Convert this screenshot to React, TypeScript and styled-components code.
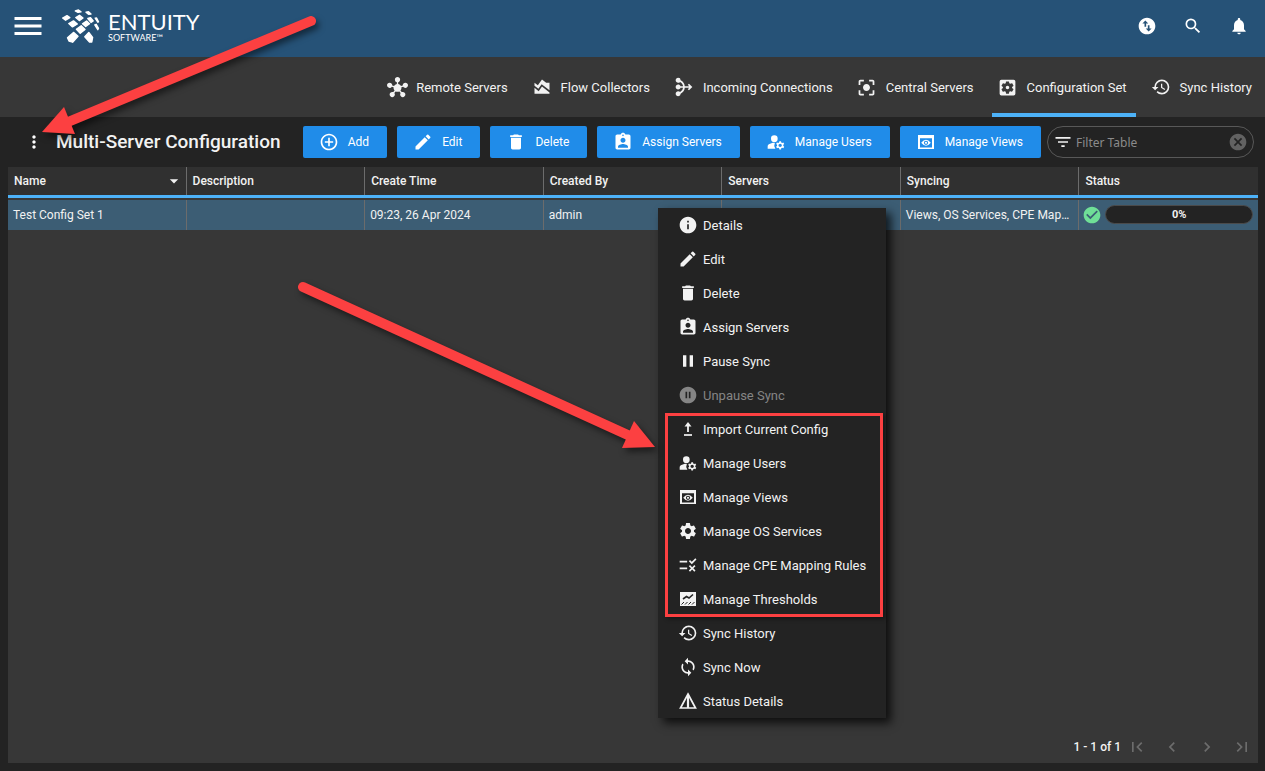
import React from "react";
import styled, { createGlobalStyle, css } from "styled-components";
import {
  MdAddCircleOutline,
  MdAreaChart,
  MdArrowDropDown,
  MdAssignmentInd,
  MdCancel,
  MdCenterFocusStrong,
  MdCheckCircle,
  MdChevronLeft,
  MdChevronRight,
  MdDelete,
  MdEdit,
  MdFilterList,
  MdFirstPage,
  MdHistory,
  MdHub,
  MdInfo,
  MdLastPage,
  MdLoop,
  MdManageAccounts,
  MdMediation,
  MdMenu,
  MdMoreVert,
  MdNotifications,
  MdPause,
  MdPauseCircleFilled,
  MdRule,
  MdSearch,
  MdSettings,
  MdSettingsApplications,
  MdSwapVerticalCircle,
} from "react-icons/md";

const GlobalStyle = createGlobalStyle`
  * { box-sizing: border-box; }
  body {
    margin: 0;
    background: #232323;
    color: #f2f2f2;
    font-family: Roboto, "Liberation Sans", sans-serif;
    font-size: 13px;
  }
  button, input { font: inherit; color: inherit; }
  svg { display: block; flex: none; }
`;

const Page = styled.div`
  position: relative;
  display: flex;
  flex-direction: column;
  min-height: 100vh;
`;

const TopBar = styled.header`
  display: flex;
  align-items: center;
  justify-content: space-between;
  height: 57px;
  padding: 0 16px 5px 10px;
  background: #265277;
`;

const Cluster = styled.div<{ $gap: number }>`
  display: flex;
  align-items: center;
  gap: ${(p) => p.$gap}px;
`;

const IconButton = styled.button<{ $color?: string }>`
  display: flex;
  align-items: center;
  justify-content: center;
  padding: 0;
  border: 0;
  background: none;
  color: ${(p) => p.$color ?? "#fff"};
  cursor: pointer;
`;

const Brand = styled.a`
  display: flex;
  align-items: center;
  gap: 7px;
  color: #fff;
  text-decoration: none;
`;

const BrandText = styled.span`
  display: flex;
  flex-direction: column;
  font-family: Lato, sans-serif;
`;

const BrandName = styled.span`
  font-size: 22px;
  line-height: 24px;
`;

const BrandSub = styled.span`
  font-size: 9px;
  line-height: 8px;
`;

const Tabs = styled.nav`
  display: flex;
  justify-content: flex-end;
  gap: 9px;
  height: 60px;
  padding-right: 4px;
  background: #373737;
`;

const Tab = styled.a<{ $active?: boolean }>`
  display: flex;
  align-items: center;
  gap: 8px;
  padding: 4px 9px 0 5px;
  border-bottom: 4px solid ${(p) => (p.$active ? "#4db2f8" : "transparent")};
  color: #f2f2f2;
  text-decoration: none;
  white-space: nowrap;
`;

const TabIcon = styled.span`
  display: flex;
  justify-content: center;
  width: 22px;
`;

const Toolbar = styled.div`
  display: flex;
  align-items: center;
  height: 50px;
  padding: 0 11px 0 24px;
`;

const Title = styled.h1`
  flex: 1;
  margin: 0 0 0 12px;
  font-size: 19px;
  font-weight: 500;
  line-height: 24px;
  white-space: nowrap;
`;

const Actions = styled.div`
  display: flex;
  gap: 10px;
  margin-right: 6px;
`;

const ActionButton = styled.button`
  display: flex;
  align-items: center;
  gap: 9px;
  height: 32px;
  padding: 0 18px 0 16px;
  border: 0;
  border-radius: 2px;
  background: #208ce9;
  color: #fff;
  font-size: 12px;
  white-space: nowrap;
  cursor: pointer;
`;

const Filter = styled.label`
  display: flex;
  align-items: center;
  gap: 3px;
  width: 207px;
  height: 32px;
  padding: 0 5px;
  border: 1px solid #585858;
  border-radius: 16px;
`;

const FilterInput = styled.input`
  flex: 1;
  min-width: 0;
  padding: 0;
  border: 0;
  outline: 0;
  background: none;
  font-family: "Noto Sans", sans-serif;
  font-size: 12px;
  &::placeholder { color: #8b8b8b; opacity: 1; }
`;

const Panel = styled.main`
  display: flex;
  flex: 1;
  flex-direction: column;
  justify-content: space-between;
  margin: 0 7px 8px 8px;
  background: #373737;
`;

const Table = styled.table`
  width: 100%;
  border-collapse: separate;
  border-spacing: 0;
  table-layout: fixed;
  font-size: 12px;
`;

const divider = css`
  &:not(:last-child) { border-right: 1px solid #6c6c6c; }
`;

const HeadCell = styled.th`
  height: 28px;
  padding: 0 2px 0 6px;
  background: #303030;
  font-weight: 500;
  text-align: left;
  ${divider}
`;

const HeadLabel = styled.span`
  display: flex;
  align-items: center;
  justify-content: space-between;
`;

const RuleCell = styled.td`
  height: 5px;
  padding: 0;
  border-top: 3px solid #4db2f8;
`;

const Cell = styled.td`
  height: 30px;
  padding: 0 5px;
  overflow: hidden;
  background: #3c5d74;
  text-overflow: ellipsis;
  white-space: nowrap;
  ${divider}
`;

const Status = styled.div`
  display: flex;
  align-items: flex-start;
  gap: 3px;
  margin-left: -2px;
`;

const Progress = styled.div`
  flex: 1;
  height: 19px;
  border: 1px solid #4a4a4a;
  border-radius: 10px;
  background: #232323;
  font-size: 11px;
  font-weight: 700;
  line-height: 18px;
  text-align: center;
`;

const Pager = styled.footer`
  display: flex;
  align-items: center;
  justify-content: flex-end;
  gap: 15px;
  height: 32px;
  padding-right: 6px;
  font-size: 12px;
  font-weight: 500;
`;

const PageCount = styled.span`
  margin-right: -9px;
`;

const Menu = styled.div`
  position: absolute;
  top: 208px;
  left: 658px;
  width: 228px;
  background: #232323;
  box-shadow: 5px 5px 9px rgba(0, 0, 0, 0.75);
`;

const MenuItem = styled.button`
  display: flex;
  align-items: center;
  gap: 5px;
  width: 100%;
  height: 34px;
  padding: 0 20px;
  border: 0;
  background: none;
  color: #f2f2f2;
  text-align: left;
  white-space: nowrap;
  cursor: pointer;
  &:disabled { color: #858585; }
`;

const MenuIcon = styled.span`
  display: flex;
  justify-content: center;
  width: 20px;
`;

const Highlight = styled.div`
  position: absolute;
  top: 205px;
  left: 7px;
  width: 218px;
  height: 204px;
  border: 3px solid #fc4041;
  box-shadow: 2px 2px 4px rgba(0, 0, 0, 0.4);
  pointer-events: none;
`;

const Annotations = styled.svg`
  position: absolute;
  top: 0;
  left: 0;
  pointer-events: none;
  filter: drop-shadow(3px 4px 3px rgba(0, 0, 0, 0.5));
`;

const LogoMark = () => (
  <svg
    width="39"
    height="35"
    viewBox="0 0 39 35"
    fill="#fff"
    stroke="#fff"
    strokeWidth="1.4"
    strokeLinejoin="round"
    aria-hidden="true"
  >
    <path d="M13.300 2L16.500 1L19 2.800L16 3.400Z" />
    <path d="M24 3.200L26.500 2.800L29 5L26.500 5.200Z" />
    <path d="M.7 9L5 6.700L7.800 8.600L3.600 11.200Z" />
    <path d="M13.800 8.500L17.500 6.300L21 9L17.300 11.600Z" />
    <path d="M25.800 9.500L28.500 8.600L31.200 12L29 13.400Z" />
    <path d="M33.200 9.200L34.600 9L36.500 12.800L35.800 13.200Z" />
    <path d="M6.800 14.500L11.500 11.900L15.300 15L10.500 17.900Z" />
    <path d="M20.500 14.800L24.600 12L27.500 14.700L23.700 17.500Z" />
    <path d="M14.400 20.300L19.200 16.700L23 20.500L18.200 24.200Z" />
    <path d="M32.800 15.800L34.200 15.300L36.500 19.300L35.800 20.700Z" />
    <path d="M5.500 28.700L11.500 23.400L16 27.300L10.600 33.200L7 32Z" />
    <path d="M22.800 27.700L26.800 23.500L30.600 28.500L29.800 33L27.500 33Z" />
  </svg>
);

const PreviewIcon = () => (
  <svg width="20" height="20" viewBox="0 0 20 20" aria-hidden="true">
    <path
      d="M2 3H18V17H2ZM4 6.200V15.400H16V6.200Z"
      fill="currentColor"
      fillRule="evenodd"
    />
    <path
      d="M5.200 10.800Q10 4.800 14.800 10.800Q10 16.800 5.200 10.800ZM10 8.700A2.100 2.100 0 1 0 10 12.900A2.100 2.100 0 1 0 10 8.700Z"
      fill="currentColor"
      fillRule="evenodd"
    />
    <circle cx="10" cy="10.800" r="1.100" fill="currentColor" />
  </svg>
);

const ImportIcon = () => (
  <svg width="18" height="18" viewBox="0 0 18 18" aria-hidden="true">
    <path d="M9 12V4" stroke="currentColor" strokeWidth="1.800" />
    <path d="M5.500 6.500L9 2L12.500 6.500Z" fill="currentColor" />
    <path d="M5 15H13" stroke="currentColor" strokeWidth="1.700" />
  </svg>
);

const ThresholdIcon = () => (
  <svg width="18" height="18" viewBox="0 0 18 18" aria-hidden="true">
    <path d="M1 2H17V16H1Z" fill="currentColor" />
    <path d="M4 9L7.500 6.500L10 8L14 4.500" fill="none" stroke="#232323" strokeWidth="1.600" />
    <path d="M2.500 14.500L5 12M6 14.500L8.500 12M9.500 14.500L12 12M13 14.500L15.500 12" stroke="#232323" strokeWidth="1" />
  </svg>
);

const StatusDetailsIcon = () => (
  <svg width="18" height="18" viewBox="0 0 18 18" aria-hidden="true">
    <path d="M9 2L16.500 16H1.500Z" fill="none" stroke="currentColor" strokeWidth="1.700" />
    <path d="M9 3V16" stroke="currentColor" strokeWidth="2.200" />
  </svg>
);

const tabs = [
  { label: "Remote Servers", icon: <MdHub size={21} /> },
  { label: "Flow Collectors", icon: <MdAreaChart size={20} /> },
  { label: "Incoming Connections", icon: <MdMediation size={20} /> },
  { label: "Central Servers", icon: <MdCenterFocusStrong size={21} /> },
  { label: "Configuration Set", icon: <MdSettingsApplications size={21} />, active: true },
  { label: "Sync History", icon: <MdHistory size={20} /> },
];

const actions = [
  { label: "Add", icon: <MdAddCircleOutline size={20} /> },
  { label: "Edit", icon: <MdEdit size={20} /> },
  { label: "Delete", icon: <MdDelete size={20} /> },
  { label: "Assign Servers", icon: <MdAssignmentInd size={20} /> },
  { label: "Manage Users", icon: <MdManageAccounts size={20} /> },
  { label: "Manage Views", icon: <PreviewIcon /> },
];

const columns = ["Name", "Description", "Create Time", "Created By", "Servers", "Syncing", "Status"];

const menuItems = [
  { label: "Details", icon: <MdInfo size={20} /> },
  { label: "Edit", icon: <MdEdit size={20} /> },
  { label: "Delete", icon: <MdDelete size={20} /> },
  { label: "Assign Servers", icon: <MdAssignmentInd size={20} /> },
  { label: "Pause Sync", icon: <MdPause size={20} /> },
  { label: "Unpause Sync", icon: <MdPauseCircleFilled size={20} />, disabled: true },
  { label: "Import Current Config", icon: <ImportIcon /> },
  { label: "Manage Users", icon: <MdManageAccounts size={20} /> },
  { label: "Manage Views", icon: <PreviewIcon /> },
  { label: "Manage OS Services", icon: <MdSettings size={20} /> },
  { label: "Manage CPE Mapping Rules", icon: <MdRule size={20} /> },
  { label: "Manage Thresholds", icon: <ThresholdIcon /> },
  { label: "Sync History", icon: <MdHistory size={20} /> },
  { label: "Sync Now", icon: <MdLoop size={20} /> },
  { label: "Status Details", icon: <StatusDetailsIcon /> },
];

export default function App() {
  return (
    <Page>
      <GlobalStyle />
      <TopBar>
        <Cluster $gap={16}>
          <IconButton aria-label="Main menu"><MdMenu size={36} /></IconButton>
          <Brand href="#">
            <LogoMark />
            <BrandText>
              <BrandName>ENTUITY</BrandName>
              <BrandSub>SOFTWARE™</BrandSub>
            </BrandText>
          </Brand>
        </Cluster>
        <Cluster $gap={26}>
          <IconButton aria-label="Transfers"><MdSwapVerticalCircle size={20} /></IconButton>
          <IconButton aria-label="Search"><MdSearch size={20} /></IconButton>
          <IconButton aria-label="Notifications"><MdNotifications size={20} /></IconButton>
        </Cluster>
      </TopBar>

      <Tabs>
        {tabs.map((t) => (
          <Tab key={t.label} href="#" $active={t.active}>
            <TabIcon>{t.icon}</TabIcon>
            {t.label}
          </Tab>
        ))}
      </Tabs>

      <Toolbar>
        <IconButton aria-label="Page options"><MdMoreVert size={20} /></IconButton>
        <Title>Multi-Server Configuration</Title>
        <Actions>
          {actions.map((a) => (
            <ActionButton key={a.label}>
              {a.icon}
              {a.label}
            </ActionButton>
          ))}
        </Actions>
        <Filter>
          <MdFilterList size={20} />
          <FilterInput placeholder="Filter Table" aria-label="Filter Table" />
          <IconButton aria-label="Clear filter" $color="#626262"><MdCancel size={20} /></IconButton>
        </Filter>
      </Toolbar>

      <Panel>
        <Table>
          <thead>
            <tr>
              {columns.map((c, i) => (
                <HeadCell key={c} scope="col">
                  <HeadLabel>
                    {c}
                    {i === 0 && <MdArrowDropDown size={20} />}
                  </HeadLabel>
                </HeadCell>
              ))}
            </tr>
          </thead>
          <tbody>
            <tr><RuleCell colSpan={7} /></tr>
            <tr>
              <Cell>Test Config Set 1</Cell>
              <Cell />
              <Cell>09:23, 26 Apr 2024</Cell>
              <Cell>admin</Cell>
              <Cell />
              <Cell>Views, OS Services, CPE Mapping Rules</Cell>
              <Cell>
                <Status>
                  <MdCheckCircle size={20} color="#6fdf97" />
                  <Progress>0%</Progress>
                </Status>
              </Cell>
            </tr>
          </tbody>
        </Table>
        <Pager>
          <PageCount>1 - 1 of 1</PageCount>
          <IconButton aria-label="First page" $color="#6c6c6c"><MdFirstPage size={20} /></IconButton>
          <IconButton aria-label="Previous page" $color="#6c6c6c"><MdChevronLeft size={20} /></IconButton>
          <IconButton aria-label="Next page" $color="#6c6c6c"><MdChevronRight size={20} /></IconButton>
          <IconButton aria-label="Last page" $color="#6c6c6c"><MdLastPage size={20} /></IconButton>
        </Pager>
      </Panel>

      <Menu role="menu">
        {menuItems.map((m) => (
          <MenuItem key={m.label} role="menuitem" disabled={m.disabled}>
            <MenuIcon>{m.icon}</MenuIcon>
            {m.label}
          </MenuItem>
        ))}
        <Highlight />
      </Menu>

      <Annotations width="670" height="460" viewBox="0 0 670 460" aria-hidden="true">
        <g fill="#fc4041" stroke="#fc4041" strokeLinecap="round">
          <path d="M311 21L68 122" strokeWidth="10" />
          <path d="M42 132L64 107L75 134Z" stroke="none" />
          <path d="M303 287L630 436" strokeWidth="10" />
          <path d="M655 447L634 421L622 448Z" stroke="none" />
        </g>
      </Annotations>
    </Page>
  );
}
